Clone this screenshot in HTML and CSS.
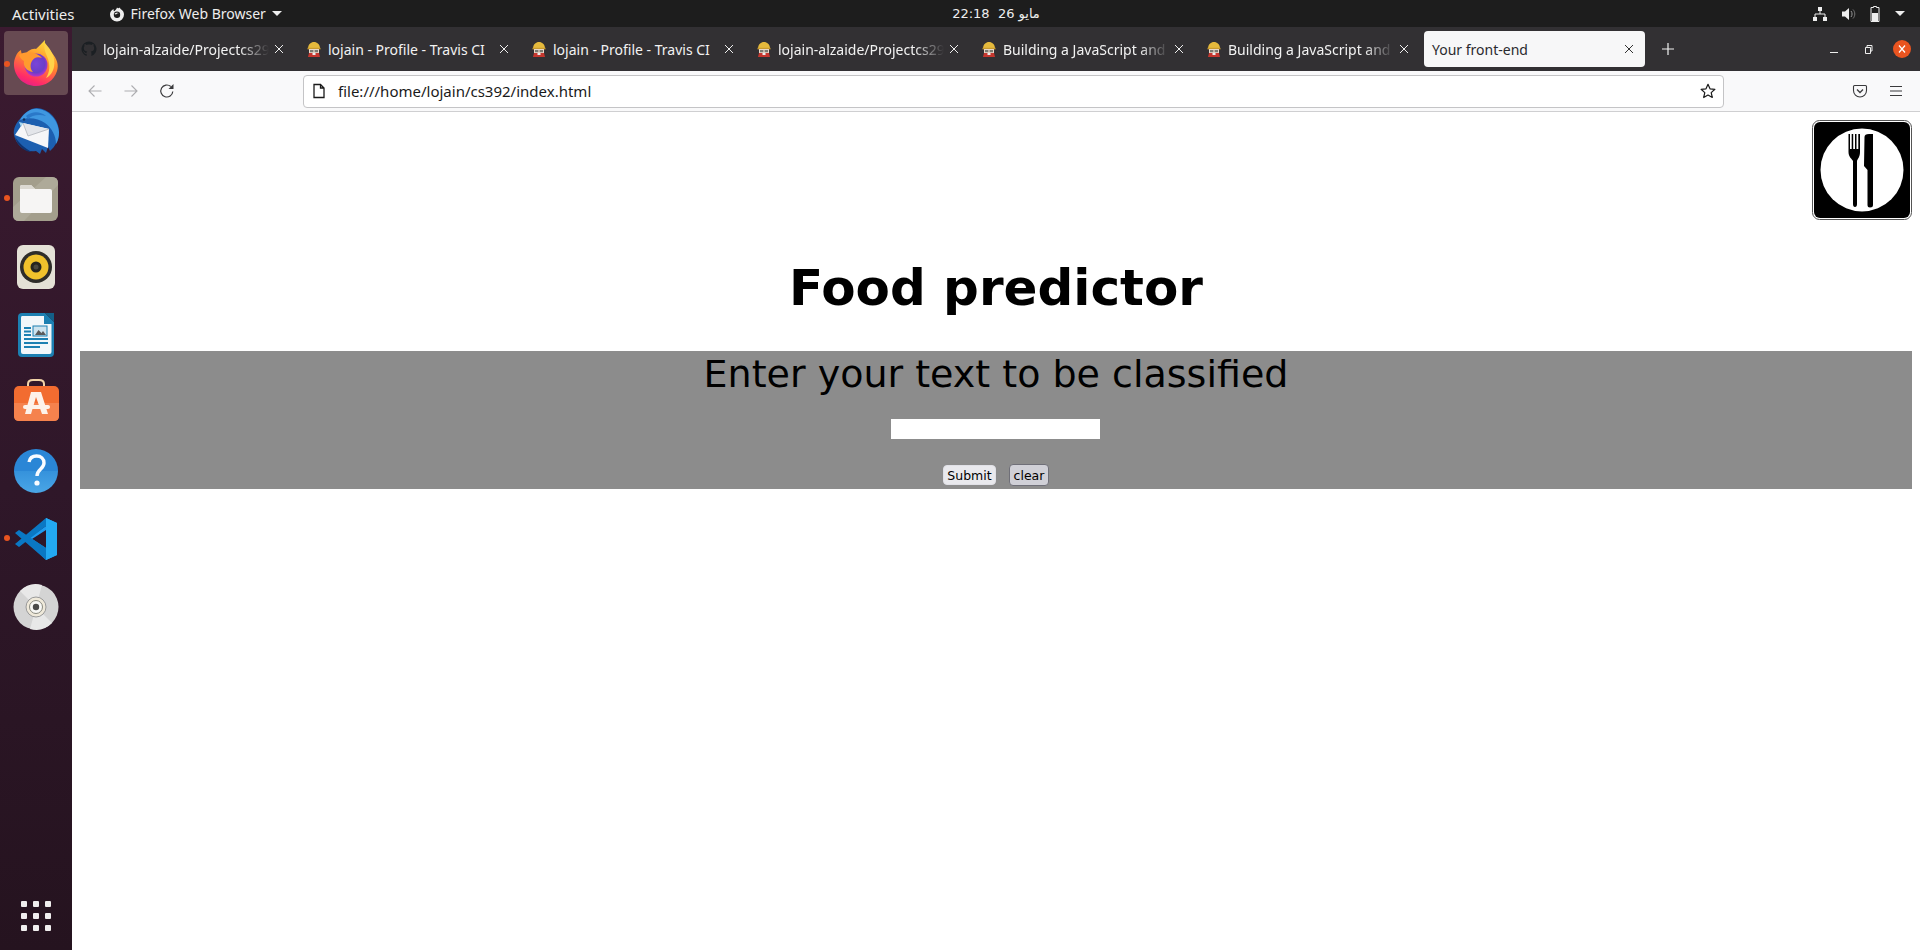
FILE: index.html
```html
<!DOCTYPE html>
<html lang="en">
<head>
<meta charset="utf-8">
<title>Your front-end</title>
<link rel="stylesheet" href="styles.css">
</head>
<body>
<svg class="defs" width="0" height="0" aria-hidden="true">
  <defs>
    <symbol id="travis" viewBox="0 0 16 16">
      <path d="M2 8 C2 3 5 1 8 1 C11 1 14 3 14 8 Z" fill="#e5b93c"/>
      <rect x="1.5" y="6.8" width="13" height="1.6" fill="#c99a2e"/>
      <rect x="3" y="8" width="10" height="4.5" fill="#e8d8c8"/>
      <rect x="4" y="9" width="3.4" height="2.2" fill="#7a7a72"/>
      <rect x="8.6" y="9" width="3.4" height="2.2" fill="#7a7a72"/>
      <path d="M3 12 H13 L14 16 H2 Z" fill="#c5372f"/>
      <rect x="6.5" y="12" width="3" height="2" fill="#eee"/>
    </symbol>
    <symbol id="close" viewBox="0 0 12 12">
      <path d="M2 2 L10 10 M10 2 L2 10" stroke="currentColor" stroke-width="1" fill="none"/>
    </symbol>
  </defs>
</svg>

<header class="topbar">
  <div class="top-left">
    <span class="top-text top-activities">Activities</span>
    <span class="app-menu">
      <svg class="app-icon" viewBox="0 0 16 16"><path d="M8 1.5 C8.6 2.6 10 2.4 11 1.4 C11 2.6 11.6 3 12.6 3.8 C14.2 5 15 6.6 15 8.6 A7 7 0 0 1 1 8.6 C1 6.2 2.4 4 4.6 3 C4.4 4 4.6 4.6 5 5.2 C6 4.6 7.6 3.4 8 1.5 Z" fill="#eee"/><circle cx="8" cy="8.8" r="3.2" fill="#1d1d1d"/><path d="M5.4 8 C6.4 6.6 8.4 6.4 9.8 7.2 C8.6 7.2 7.6 7.6 7 8.4 Z" fill="#eee"/></svg>
      <span class="top-text">Firefox Web Browser</span>
      <span class="caret"></span>
    </span>
  </div>
  <div class="top-clock">22:18&nbsp;&nbsp;26 مايو</div>
  <div class="top-right">
    <svg class="tray net" viewBox="0 0 16 16"><path d="M6 1 H10 V5 H6 Z M1 11 H5 V15 H1 Z M11 11 H15 V15 H11 Z" fill="#eee"/><path d="M8 5 V8 M3 11 V8 H13 V11" stroke="#eee" fill="none"/></svg>
    <svg class="tray vol" viewBox="0 0 16 16"><path d="M1 5.5 H4 L8 2 V14 L4 10.5 H1 Z" fill="#eee"/><path d="M10 5 C11.4 6.6 11.4 9.4 10 11" stroke="#999" fill="none"/><path d="M12 3.5 C14.4 6 14.4 10 12 12.5" stroke="#777" fill="none"/></svg>
    <svg class="tray bat" viewBox="0 0 10 16"><path d="M3.5 0.5 H6.5 V1.5 H9 V15.5 H1 V1.5 H3.5 Z" fill="none" stroke="#eee"/><rect x="2" y="7" width="6" height="8" fill="#eee"/></svg>
    <span class="caret"></span>
  </div>
</header>

<div class="desktop">
  <nav class="dock">
    <div class="dock-item active">
      <span class="run-dot"></span>
      <svg class="dock-icon" viewBox="0 0 48 48">
        <defs>
          <linearGradient id="ff" x1="0.7" y1="0" x2="0.3" y2="1"><stop offset="0" stop-color="#ffe13d"/><stop offset="0.45" stop-color="#ff8a2b"/><stop offset="0.85" stop-color="#ff2a6a"/><stop offset="1" stop-color="#e0218a"/></linearGradient>
          <radialGradient id="ffg" cx="0.5" cy="0.45" r="0.55"><stop offset="0" stop-color="#7a45d8"/><stop offset="0.7" stop-color="#6a3ec8"/><stop offset="1" stop-color="#b833c8"/></radialGradient>
        </defs>
        <path d="M33 1 C32 7 36 9 40 14 C45 20 47 26 45 32 C42 42 33 47 24 47 C12 47 3 38 2 27 C1.500 20 5 13 9 11 C9 14 10 16 12 17 C15 12 20 9 24 10 C27 7 29 5 33 1 Z" fill="url(#ff)"/>
        <circle cx="24" cy="26" r="11.500" fill="url(#ffg)"/>
        <path d="M7 16 C12 12 24 12 30 19 C25 17 22 19 20 22 C18 25 18 30 21 33 C14 32 11 27 12 22 C10 21 8 19 7 16 Z" fill="#ff9a2e"/>
        <path d="M33 4 C39 11 44 18 42 28 C41 33 38 37 34 39 C38 33 38 26 36 20 C34 14 31 10 33 4 Z" fill="#ffd34a"/>
      </svg>
    </div>
    <div class="dock-item">
      <svg class="dock-icon" viewBox="0 0 48 48">
        <path d="M2 28 C1 22 4 16 8 12 C13 5 19 1 25 1 C37 2 47 12 47 25 C47 33 43 40 38 44 L36 40 L34 46 L30 42 L28 47 L24 44 C13 46 4 38 2 28 Z" fill="#1c5fb0"/>
        <path d="M8 13 C13 5 19 1 26 2 C37 3 46 13 47 25 C47 30 46 34 44 37 C44 29 40 21 33 16 C26 11 16 10 8 13 Z" fill="#3f97e0"/>
        <path d="M14 9 C20 4 28 4 34 9 C27 7 20 8 16 12 Z" fill="#2a78c8"/>
        <path d="M11 16 L37 22 L36 41 L3 28 Z" fill="#f6f6f8"/>
        <path d="M11 16 L16 29 L37 22" fill="#e3e5ea" stroke="#a9adb5" stroke-width="0.700"/>
        <path d="M7 15 L11 16 L9 20 Z" fill="#a8d8f0"/>
        <circle cx="12" cy="12.500" r="1.200" fill="#10305a"/>
        <path d="M3 30 C7 36 12 41 20 45 C12 45 5 38 3 30 Z" fill="#0f3470"/>
      </svg>
    </div>
    <div class="dock-item">
      <span class="run-dot"></span>
      <svg class="dock-icon" viewBox="0 0 48 48">
        <rect x="1" y="2" width="45" height="44" rx="6" fill="#a39e8c"/>
        <path d="M1 32 L34 2 H40 Q46 2 46 8 V10 L12 46 H7 Q1 46 1 40 Z" fill="#aeaa99"/>
        <path d="M8 12 Q8 10 10 10 H19 L23 14 H38 Q40 14 40 16 V36 Q40 38 38 38 H10 Q8 38 8 36 Z" fill="#f6f5f4"/>
        <path d="M8 12 Q8 10 10 10 H19 L23 14 H8 Z" fill="#dcd9d2"/>
      </svg>
    </div>
    <div class="dock-item">
      <svg class="dock-icon" viewBox="0 0 48 48">
        <rect x="5" y="2" width="38" height="44" rx="6" fill="#e4e1d6"/>
        <circle cx="24" cy="24" r="16" fill="#2e2d29"/>
        <circle cx="24" cy="24" r="12.500" fill="#f0c22c"/>
        <circle cx="24" cy="24" r="5.500" fill="#26251f"/>
        <circle cx="24" cy="24" r="2.500" fill="#4a4840"/>
      </svg>
    </div>
    <div class="dock-item">
      <svg class="dock-icon" viewBox="0 0 48 48">
        <path d="M10 2 H33 L42 11 V42 Q42 46 38 46 H10 Q6 46 6 42 V6 Q6 2 10 2 Z" fill="#1c80b2"/>
        <path d="M10 5 H32 V13 H39.500 V41 Q39.500 43 37.500 43 H11 Q9 43 9 41 V7 Q9 5 10 5 Z" fill="#f2f7fa"/>
        <path d="M33 2 L42 11 V2 Z" fill="#135f87"/>
        <path d="M12 17 H19 M12 20.500 H19 M12 24 H19 M12 28 H36 M12 32 H36 M12 36 H28" stroke="#1c80b2" stroke-width="2" fill="none"/>
        <rect x="21" y="15" width="14" height="10" fill="#cde3ee" stroke="#1c80b2"/>
        <path d="M23 24 L26.500 19 L29.500 22 L31 20 L34 24 Z" fill="#5a5a5a"/>
      </svg>
    </div>
    <div class="dock-item">
      <svg class="dock-icon" viewBox="0 0 48 48">
        <path d="M16 7 V5 Q16 1 21 1 H27 Q32 1 32 5 V7" fill="none" stroke="#f2d4a8" stroke-width="2"/>
        <rect x="2" y="7" width="45" height="35" rx="5" fill="#f26c30"/>
        <path d="M2 24 H47 V37 Q47 42 42 42 H7 Q2 42 2 37 Z" fill="#f5824d"/>
        <path d="M19 13 H29 L36 35 H30 L24 18 L19 35 H13 Z" fill="#fdf2ea"/>
        <rect x="11" y="26" width="27" height="4" rx="2" fill="#fdf2ea"/>
      </svg>
    </div>
    <div class="dock-item">
      <svg class="dock-icon" viewBox="0 0 48 48">
        <defs><linearGradient id="hp" x1="0" y1="0" x2="0" y2="1"><stop offset="0" stop-color="#2a86d6"/><stop offset="0.5" stop-color="#2a86d6"/><stop offset="0.5" stop-color="#3592dc"/><stop offset="1" stop-color="#4aa6e6"/></linearGradient></defs>
        <circle cx="24" cy="24" r="22" fill="url(#hp)"/>
        <path d="M17 15 C18 10 22 9 24.500 9 C29 9 32 12 32 16 C32 22 25 22 25 29" fill="none" stroke="#fafcff" stroke-width="3.400"/>
        <circle cx="25" cy="36" r="2.600" fill="#fafcff"/>
      </svg>
    </div>
    <div class="dock-item">
      <span class="run-dot"></span>
      <svg class="dock-icon" viewBox="0 0 48 48">
        <path d="M34 3 L45 8 V40 L34 45 L14 25 L34 11 Z M34 15 L20 24 L34 33 Z" fill="#1f9cf0"/>
        <path d="M34 3 L34 45 L45 40 V8 Z" fill="#23a9f2"/>
        <path d="M34 11 L7 32 L3 29 L34 3 Z M3 18 L7 15 L34 33 V45 Z" fill="#0a78c4"/>
      </svg>
    </div>
    <div class="dock-item">
      <svg class="dock-icon" viewBox="0 0 48 48">
        <circle cx="24" cy="24" r="22.500" fill="#d4d4d4"/>
        <path d="M24 24 L8 8 A22.500 22.500 0 0 1 30 2 Z M24 24 L40 40 A22.500 22.500 0 0 1 18 46 Z" fill="#e8e8e8"/>
        <circle cx="24" cy="24" r="10" fill="#efe9da" stroke="#999"/>
        <circle cx="24" cy="24" r="6.500" fill="#f8f8f6" stroke="#8a8a80"/>
        <circle cx="24" cy="24" r="3.200" fill="#4a4a4a"/>
      </svg>
    </div>
    <div class="dock-apps">
      <span></span><span></span><span></span><span></span><span></span><span></span><span></span><span></span><span></span>
    </div>
  </nav>

  <div class="browser">
    <div class="tabstrip">
      <div class="tab"><svg class="favicon" viewBox="0 0 16 16"><path d="M8 0.500 A7.500 7.500 0 0 0 5.600 15.100 V12.800 C3.500 13.300 3.100 11.800 3.100 11.800 C2.700 11 2.200 10.700 2.200 10.700 C1.500 10.200 2.200 10.200 2.200 10.200 C3 10.300 3.400 11 3.400 11 C4.100 12.200 5.200 11.900 5.700 11.700 C5.800 11.200 6 10.800 6.200 10.600 C4.500 10.400 2.800 9.800 2.800 7 C2.800 6.200 3.100 5.500 3.500 5 C3.400 4.800 3.200 4.100 3.600 3.100 C3.600 3.100 4.200 2.900 5.700 3.900 C7.100 3.500 8.900 3.500 10.300 3.900 C11.800 2.900 12.400 3.100 12.400 3.100 C12.800 4.100 12.600 4.800 12.500 5 C12.900 5.500 13.200 6.200 13.200 7 C13.200 9.800 11.500 10.400 9.800 10.600 C10.100 10.900 10.400 11.400 10.400 12.100 V15.100 A7.500 7.500 0 0 0 8 0.500 Z" fill="#1b1f23"/></svg><span class="tab-label tab-fade">lojain-alzaide/Projectcs29</span><svg class="tab-close"><use href="#close"/></svg></div>
      <div class="tab"><svg class="favicon"><use href="#travis"/></svg><span class="tab-label">lojain - Profile - Travis CI</span><svg class="tab-close"><use href="#close"/></svg></div>
      <div class="tab"><svg class="favicon"><use href="#travis"/></svg><span class="tab-label">lojain - Profile - Travis CI</span><svg class="tab-close"><use href="#close"/></svg></div>
      <div class="tab"><svg class="favicon"><use href="#travis"/></svg><span class="tab-label tab-fade">lojain-alzaide/Projectcs29</span><svg class="tab-close"><use href="#close"/></svg></div>
      <div class="tab"><svg class="favicon"><use href="#travis"/></svg><span class="tab-label tab-fade">Building a JavaScript and</span><svg class="tab-close"><use href="#close"/></svg></div>
      <div class="tab"><svg class="favicon"><use href="#travis"/></svg><span class="tab-label tab-fade">Building a JavaScript and</span><svg class="tab-close"><use href="#close"/></svg></div>
      <div class="tab tab-active"><span class="tab-label">Your front-end</span><svg class="tab-close"><use href="#close"/></svg></div>
      <svg class="new-tab" viewBox="0 0 14 14"><path d="M7 1 V13 M1 7 H13" stroke="#f2f2f2" stroke-width="1.200" fill="none"/></svg>
      <div class="win-controls">
        <svg class="win-btn" viewBox="0 0 12 12"><path d="M2 9.500 H10" stroke="#eee" stroke-width="1"/></svg>
        <svg class="win-btn" viewBox="0 0 12 12"><path d="M3.500 4.500 H8.500 V10.500 H3.500 Z M5 4.500 V2.500 H10 V8 H8.500" stroke="#eee" fill="none"/></svg>
        <span class="win-close"><svg viewBox="0 0 12 12"><path d="M3 2.500 L9 9.500 M9 2.500 L3 9.500" stroke="#fff" stroke-width="1.200" fill="none"/></svg></span>
      </div>
    </div>

    <div class="navbar">
      <svg class="nav-icon nav-dim" viewBox="0 0 16 16"><path d="M14.500 8 H2 M7.500 2.500 L2 8 L7.500 13.500" fill="none" stroke="currentColor" stroke-width="1.100"/></svg>
      <svg class="nav-icon nav-dim" viewBox="0 0 16 16"><path d="M1.500 8 H14 M8.500 2.500 L14 8 L8.500 13.500" fill="none" stroke="currentColor" stroke-width="1.100"/></svg>
      <svg class="nav-icon" viewBox="0 0 16 16"><path d="M13.800 8.500 A6 6 0 1 1 11.800 3.500" fill="none" stroke="currentColor" stroke-width="1.200"/><path d="M14.500 1 V6 H9.500 Z" fill="currentColor"/></svg>
      <div class="urlbar">
        <svg class="url-file" viewBox="0 0 16 16"><path d="M3 1.500 H9.500 L13 5 V14.500 H3 Z M9.500 1.500 V5 H13" fill="none" stroke="#1a1a1a" stroke-width="1.300"/></svg>
        <span class="url-text">file:///home/lojain/cs392/index.html</span>
        <svg class="url-star" viewBox="0 0 16 16"><path d="M8 1.300 L10 5.800 L14.900 6.300 L11.200 9.600 L12.300 14.500 L8 12 L3.700 14.500 L4.800 9.600 L1.100 6.300 L6 5.800 Z" fill="none" stroke="#1a1a1a" stroke-width="1.200" stroke-linejoin="round"/></svg>
      </div>
      <svg class="nav-icon pocket" viewBox="0 0 16 16"><path d="M2.500 2.500 H13.500 Q14.500 2.500 14.500 3.500 V7.500 A6.500 6.500 0 0 1 1.500 7.500 V3.500 Q1.500 2.500 2.500 2.500 Z" fill="none" stroke="currentColor" stroke-width="1.100"/><path d="M5 6.500 L8 9.500 L11 6.500" fill="none" stroke="currentColor" stroke-width="1.300"/></svg>
      <svg class="nav-icon" viewBox="0 0 16 16"><path d="M2 3.500 H14 M2 8 H14 M2 12.500 H14" stroke="currentColor" stroke-width="1.100" fill="none"/></svg>
    </div>

    <main class="page">
      <svg class="logo" viewBox="0 0 100 100" role="img" aria-label="Food">
        <rect x="0.500" y="0.500" width="99" height="99" rx="7" fill="#fff" stroke="#555"/>
        <rect x="2" y="2" width="96" height="96" rx="6" fill="#000"/>
        <circle cx="50" cy="50" r="41.500" fill="#fff"/>
        <path d="M36.500 14 H38 V29 H39.700 V14 H41.200 V29 H43 V14 H44.500 V29 H46.300 V14 H48 V32 C48 37 45.500 39 45 41 V84 Q45 87 43 87 Q41 87 41 84 V41 C40 39 36.500 37 36.500 32 Z" fill="#000"/>
        <path d="M52.500 17 Q52.500 14 57 14 H61 V85 Q61 87.500 58 87.500 Q55.500 87.500 55.500 85 V50 L52 46 Z" fill="#000"/>
      </svg>
      <h1 class="title">Food predictor</h1>
      <section class="panel">
        <h2 class="panel-title">Enter your text to be classified</h2>
        <form class="predict-form">
          <input class="text-input" type="text" aria-label="Text">
          <div class="form-actions">
            <button class="btn" type="button">Submit</button>
            <button class="btn btn-clear" type="button">clear</button>
          </div>
        </form>
      </section>
    </main>
  </div>
</div>
</body>
</html>
```

FILE: styles.css
```css
* { box-sizing: border-box; }
html, body { margin: 0; height: 100%; }
body {
  width: 1920px;
  height: 950px;
  overflow: hidden;
  display: flex;
  flex-direction: column;
  background: #fff;
  font-family: "Noto Sans", "DejaVu Sans", sans-serif;
}
.defs { position: absolute; }

/* GNOME top bar */
.topbar {
  flex: 0 0 27px;
  display: grid;
  grid-template-columns: 72px 1fr auto 1fr;
  align-items: center;
  background: #1d1d1d;
  color: #eee;
  font-size: 14px;
}
.top-left { grid-column: 1 / 3; display: flex; align-items: center; padding-left: 12px; }
.top-activities { font-size: 15px; }
.app-menu { display: flex; align-items: center; margin-left: 34px; }
.app-icon { width: 16px; height: 16px; margin-right: 6px; }
.top-text { white-space: nowrap; }
.caret {
  width: 0;
  height: 0;
  border-left: 5px solid transparent;
  border-right: 5px solid transparent;
  border-top: 5px solid #eee;
  margin-left: 6px;
}
.top-clock { grid-column: 3; font-family: "DejaVu Sans", sans-serif; font-size: 13px; }
.top-right { grid-column: 4; display: flex; align-items: center; justify-content: flex-end; padding-right: 15px; gap: 13px; }
.tray { height: 16px; width: 16px; }
.tray.bat { width: 10px; }
.top-right .caret { margin-left: 2px; }

.desktop { flex: 1; display: flex; min-height: 0; }

/* Ubuntu dock */
.dock {
  flex: 0 0 72px;
  display: flex;
  flex-direction: column;
  padding-top: 2px;
  background: linear-gradient(180deg, #3b1a30 0%, #2f1729 50%, #25131f 100%);
}
.dock-item {
  position: relative;
  flex: 0 0 68px;
  margin: 0 4px;
  display: flex;
  align-items: center;
  justify-content: center;
  border-radius: 4px;
}
.dock-item.active { flex-basis: 64px; margin-top: 2px; margin-bottom: 2px; background: #674a52; }
.dock-icon { width: 48px; height: 48px; overflow: visible; }
.run-dot {
  position: absolute;
  left: 0;
  top: 30px;
  width: 6px;
  height: 6px;
  border-radius: 50%;
  background: #e95420;
}
.dock-apps {
  margin: auto 0 19px;
  align-self: center;
  display: grid;
  grid-template-columns: repeat(3, 6px);
  grid-auto-rows: 6px;
  gap: 6px;
}
.dock-apps span { background: #f0eeee; border-radius: 1px; }

/* Firefox chrome */
.browser { flex: 1; display: flex; flex-direction: column; min-width: 0; }
.tabstrip {
  flex: 0 0 44px;
  display: flex;
  align-items: center;
  background: #323033;
  color: #f2f2f2;
  font-size: 14px;
}
.tab {
  flex: 0 0 221px;
  min-width: 0;
  height: 36px;
  margin: 0 2px;
  padding: 0 6px 0 8px;
  display: flex;
  align-items: center;
  border-radius: 4px;
}
.favicon { flex: 0 0 16px; width: 16px; height: 16px; margin: 0 6px 0 -1px; }
.tab-label {
  flex: 1;
  min-width: 0;
  white-space: nowrap;
}
.tab-fade {
  -webkit-mask-image: linear-gradient(90deg, #000 82%, transparent 100%);
  mask-image: linear-gradient(90deg, #000 82%, transparent 100%);
}
.tab-close { flex: 0 0 12px; width: 12px; height: 12px; margin: 0 4px 0 4px; color: #eee; }
.tab-active { background: #f7f7f8; color: #2a2a2e; }
.tab-active .tab-close { color: #333; }
.new-tab { flex: 0 0 14px; width: 14px; height: 14px; margin-left: 14px; }
.win-controls { margin-left: auto; padding-right: 9px; display: flex; align-items: center; gap: 22px; }
.win-btn { width: 12px; height: 12px; }
.win-close {
  width: 18px;
  height: 18px;
  margin-left: -3px;
  border-radius: 50%;
  background: #e95420;
  display: flex;
  align-items: center;
  justify-content: center;
}
.win-close svg { width: 12px; height: 12px; }

.navbar {
  flex: 0 0 41px;
  display: flex;
  align-items: center;
  padding: 0 16px 0 15px;
  background: #f9f9fa;
  border-bottom: 1px solid #cfcfd1;
  color: #3a3a3c;
}
.nav-icon { flex: 0 0 16px; width: 16px; height: 16px; margin-right: 20px; }
.nav-dim { color: #adadb0; }
.urlbar {
  flex: 0 0 1421px;
  height: 33px;
  margin-left: 108px;
  display: flex;
  align-items: center;
  padding: 0 7px 0 7px;
  background: #fff;
  border: 1px solid #c4c4c6;
  border-radius: 4px;
  color: #1a1a1a;
  font-size: 15px;
}
.url-file { width: 16px; height: 16px; margin-right: 11px; }
.url-text { flex: 1; white-space: nowrap; }
.url-star { width: 16px; height: 16px; }
.pocket { margin-left: 128px; }
.navbar .nav-icon:last-child { margin-right: 0; }

/* Page content */
.page { flex: 1; padding: 8px; background: #fff; min-height: 0; }
.logo { float: right; width: 100px; height: 100px; }
.title {
  clear: both;
  margin: 0;
  padding-top: 38px;
  height: 131px;
  text-align: center;
  font-family: "DejaVu Sans", sans-serif;
  font-size: 50px;
  font-weight: 700;
  line-height: 60px;
  color: #000;
}
.panel {
  height: 138px;
  background: #8c8c8c;
  text-align: center;
  color: #000;
}
.panel-title {
  margin: 0;
  font-family: "DejaVu Sans", sans-serif;
  font-size: 38px;
  font-weight: 400;
  line-height: 47px;
}
.predict-form { display: flex; flex-direction: column; align-items: center; }
.text-input {
  width: 209px;
  height: 20px;
  margin: 21px 1px 0 0;
  border: 0;
  background: #fff;
}
.form-actions { display: flex; gap: 13px; margin-top: 26px; }
.btn {
  height: 20px;
  width: 53px;
  padding: 0;
  font-family: "DejaVu Sans", sans-serif;
  font-size: 12.500px;
  color: #000;
  background: #e9e9ed;
  border: 1px solid #e0e0e6;
  border-radius: 4px;
}
.btn-clear { width: 40px; height: 22px; margin-top: -1px; background: #d0d0d7; border-color: #6f6f78; }
```
